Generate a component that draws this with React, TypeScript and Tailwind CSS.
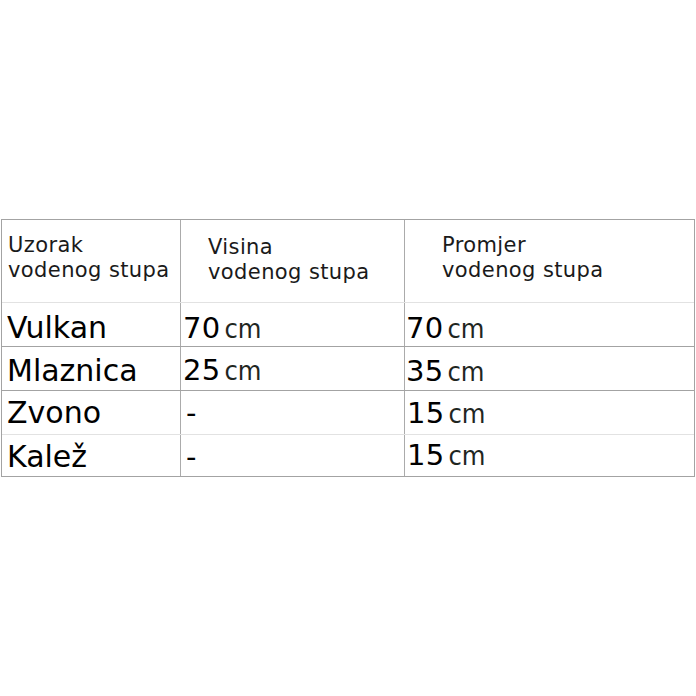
import React from "react";

const font = { fontFamily: '"DejaVu Sans", Verdana, sans-serif' };

function Val({ n, pt }: { n: string; pt: string }) {
  return (
    <div className={`${pt} pl-[2px] text-[29px] leading-[34px] text-black whitespace-nowrap`}>
      <span className="tracking-[0.3px]">{n}</span>
      <span className="ml-[4px] text-[27px] text-[#1f261f] font-['DejaVu_Sans_Condensed','DejaVu_Sans',sans-serif] font-stretch-condensed">
        cm
      </span>
    </div>
  );
}

export default function App() {
  return (
    <div className="w-[696px] h-[696px] bg-white pt-[219px]" style={font}>
      <div className="ml-[1px] w-[694px] border border-[#a3a3a3]">
        {/* header */}
        <div className="grid grid-cols-[179px_224px_1fr] h-[83px] border-b border-[#e2e2e2] text-[21px] leading-[25px] tracking-[0.4px] text-[#1a1a1a]">
          <div className="border-r border-[#ababab] pt-[13px] pl-[6px]">
            <div>Uzorak</div>
            <div>vodenog stupa</div>
          </div>
          <div className="border-r border-[#ababab] pt-[15px] pl-[27px]">
            <div>Visina</div>
            <div>vodenog stupa</div>
          </div>
          <div className="pt-[13px] pl-[37px]">
            <div>Promjer</div>
            <div>vodenog stupa</div>
          </div>
        </div>
        {/* row 1 */}
        <div className="grid grid-cols-[179px_224px_1fr] h-[44px] border-b border-[#a3a3a3]">
          <div className="border-r border-[#ababab] pt-[8px] pl-[5px] text-[30px] leading-[34px]">Vulkan</div>
          <div className="border-r border-[#ababab]">
            <Val n="70" pt="pt-[8px]" />
          </div>
          <div className="-ml-[1px]">
            <Val n="70" pt="pt-[8px]" />
          </div>
        </div>
        {/* row 2 */}
        <div className="grid grid-cols-[179px_224px_1fr] h-[44px] border-b border-[#a3a3a3]">
          <div className="border-r border-[#ababab] pt-[7px] pl-[5px] text-[30px] leading-[34px]">Mlaznica</div>
          <div className="border-r border-[#ababab]">
            <Val n="25" pt="pt-[6px]" />
          </div>
          <div className="-ml-[1px]">
            <Val n="35" pt="pt-[7px]" />
          </div>
        </div>
        {/* row 3 */}
        <div className="grid grid-cols-[179px_224px_1fr] h-[44px] border-b border-[#e2e2e2]">
          <div className="border-r border-[#ababab] pt-[5px] pl-[5px] text-[30px] leading-[34px]">Zvono</div>
          <div className="border-r border-[#ababab] pt-[5px] pl-[5px] text-[29px] leading-[34px]">-</div>
          <div>
            <Val n="15" pt="pt-[5px]" />
          </div>
        </div>
        {/* row 4 */}
        <div className="grid grid-cols-[179px_224px_1fr] h-[41px]">
          <div className="border-r border-[#ababab] pt-[5px] pl-[5px] text-[30px] leading-[34px]">Kalež</div>
          <div className="border-r border-[#ababab] pt-[5px] pl-[5px] text-[29px] leading-[34px]">-</div>
          <div>
            <Val n="15" pt="pt-[3px]" />
          </div>
        </div>
      </div>
    </div>
  );
}
